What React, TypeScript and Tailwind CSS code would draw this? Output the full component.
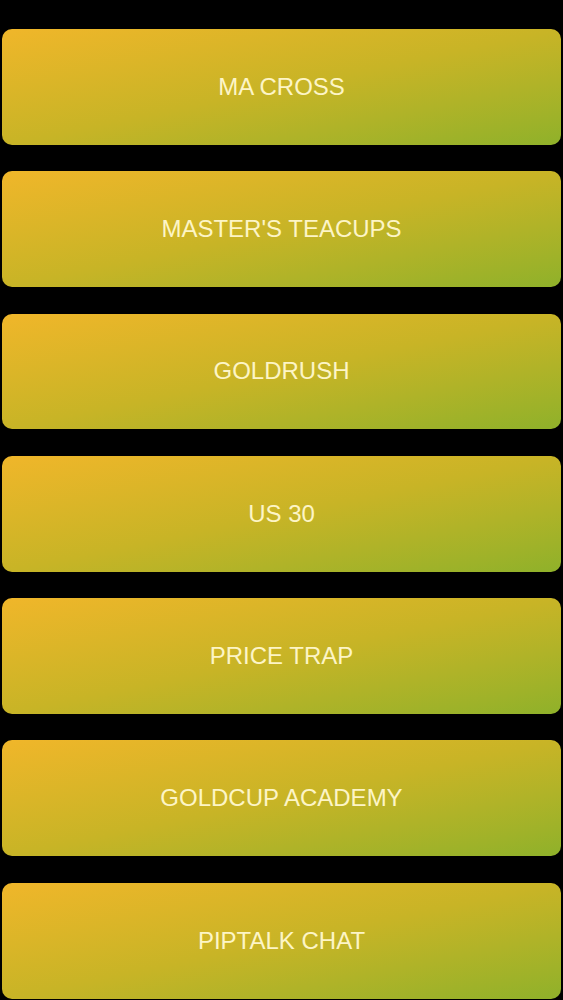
const items = [
  'MA CROSS',
  "MASTER'S TEACUPS",
  'GOLDRUSH',
  'US 30',
  'PRICE TRAP',
  'GOLDCUP ACADEMY',
  'PIPTALK CHAT',
];

export default function App() {
  return (
    <div className="min-h-screen h-[1000px] overflow-hidden bg-black px-[2px] pt-[29px]">
      <div className="flex flex-col gap-[26.5px]">
        {items.map((label) => (
          <button
            key={label}
            className="flex h-[115.8px] w-full items-center justify-center rounded-[10px] bg-gradient-to-br from-[#f0b62a] via-[#c8b426] to-[#8fb12a] text-[24px] text-[#fdf5c6] font-['Liberation_Sans',Arial,sans-serif]"
          >
            {label}
          </button>
        ))}
      </div>
    </div>
  );
}
